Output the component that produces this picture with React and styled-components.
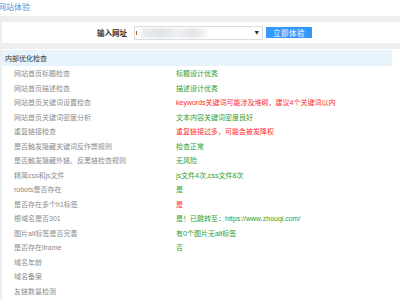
import React from 'react';
import styled, { createGlobalStyle } from 'styled-components';

const Global = createGlobalStyle`
  html, body { margin: 0; padding: 0; background: #fff; }
  body { font-family: "Noto Sans CJK SC", "Liberation Sans", sans-serif; }
  * { box-sizing: border-box; }
`;

const Page = styled.div`
  width: 400px;
  height: 300px;
  overflow: hidden;
  display: flex;
  flex-direction: column;
  background: #fff;
`;

const TitleBar = styled.div`
  height: 16px;
  display: flex;
  align-items: center;
  padding-bottom: 2px;
`;

const Title = styled.span`
  font-size: 8px;
  line-height: 1;
  color: #3d9ae0;
  margin-left: -2px;
`;

const Body = styled.div`
  flex: 1;
  min-height: 0;
  background: #eeeeee;
  padding: 6px 0 0 2px;
  display: flex;
  flex-direction: column;
  gap: 6px;
`;

const SearchPanel = styled.div`
  height: 21px;
  background: #fff;
  display: flex;
  align-items: center;
  padding-left: 95px;
`;

const SearchLabel = styled.span`
  font-size: 7.5px;
  font-weight: bold;
  color: #333;
  line-height: 1;
  margin-right: 7px;
`;

const SelectBox = styled.div`
  width: 129px;
  height: 14px;
  border: 1px solid #dcdcdc;
  display: flex;
  align-items: center;
  padding-left: 1px;
  padding-right: 3px;
  margin-right: 3px;
`;

const Caret = styled.span`
  width: 1px;
  height: 4px;
  background: #c0582a;
`;

const Blurred = styled.span`
  margin-left: 4px;
  width: 66px;
  height: 10px;
  background: linear-gradient(90deg, #eceef0 0%, #dfe2e6 30%, #eef0f2 55%, #e2e5e8 80%, #f4f5f6 100%);
  filter: blur(1.5px);
`;

const Spacer = styled.span`
  flex: 1;
`;

const Arrow = styled.span`
  font-size: 4.5px;
  line-height: 1;
  color: #333;
`;

const Button = styled.button`
  width: 46px;
  height: 11px;
  padding: 0;
  border: none;
  background: #3399ff;
  color: #fff;
  font-family: "Noto Sans CJK SC", sans-serif;
  font-size: 7.5px;
  line-height: 11px;
  letter-spacing: 0.5px;
`;

const ScrollPanel = styled.div`
  flex: 1;
  min-height: 0;
  background: #fff;
  overflow-y: scroll;
  padding-top: 1px;

  &::-webkit-scrollbar { width: 8px; }
  &::-webkit-scrollbar-track { background: #f2f2f2; border-left: 1px solid #e2e2e2; }
  &::-webkit-scrollbar-thumb { background: #e4e4e4; border: 1px solid #c8c8c8; }
  &::-webkit-scrollbar-button:single-button { display: block; height: 8px; background: #f2f2f2; }
`;

const Header = styled.div`
  height: 16px;
  margin-right: 8px;
  background: #e8f4fc;
  display: flex;
  align-items: center;
  padding-left: 3px;
  font-size: 7px;
  color: #333;
`;

const List = styled.div`
  padding: 1px 0 14px;
`;

const Row = styled.div`
  display: grid;
  grid-template-columns: 162px 1fr;
  align-items: center;
  height: 14.5px;
  padding-left: 12px;
  font-family: "Liberation Sans", "Noto Sans CJK SC", sans-serif;
  font-size: 7px;
  line-height: 14.5px;
  white-space: nowrap;
`;

const Label = styled.span`
  color: #8c8c8c;
`;

const Value = styled.span`
  color: ${p => (p.$tone === 'bad' ? '#ff2b2b' : '#2f9e2f')};
`;

const rows = [
  ['网站首页标题检查', '标题设计优秀', 'good'],
  ['网站首页描述检查', '描述设计优秀', 'good'],
  ['网站首页关键词设置检查', 'keywords关键词可能涉及堆砌，建议4个关键词以内', 'bad'],
  ['网站首页关键词密度分析', '文本内容关键词密度良好', 'good'],
  ['重复链接检查', '重复链接过多，可能会被发降权', 'bad'],
  ['是否触发隐藏关键词反作弊规则', '检查正常', 'good'],
  ['是否触发隐藏外链、反黑链检查规则', '无风险', 'good'],
  ['精简css和js文件', 'js文件4次,css文件8次', 'good'],
  ['robots是否存在', '是', 'good'],
  ['是否存在多个h1标签', '是', 'bad'],
  ['根域名是否301', '是！已跳转至：https://www.zhouqi.com/', 'good'],
  ['图片alt标签是否完善', '有0个图片无alt标签', 'good'],
  ['是否存在iframe', '否', 'good'],
  ['域名年龄', '', 'good'],
  ['域名备案', '', 'good'],
  ['友链数量检测', '', 'good'],
];

export default function App() {
  return (
    <>
      <Global />
      <Page>
        <TitleBar>
          <Title>网站体验</Title>
        </TitleBar>
        <Body>
          <SearchPanel>
            <SearchLabel>输入网址</SearchLabel>
            <SelectBox>
              <Caret />
              <Blurred />
              <Spacer />
              <Arrow>▼</Arrow>
            </SelectBox>
            <Button>立即体验</Button>
          </SearchPanel>
          <ScrollPanel>
            <Header>内部优化检查</Header>
            <List>
              {rows.map(([label, value, tone]) => (
                <Row key={label}>
                  <Label>{label}</Label>
                  <Value $tone={tone}>{value}</Value>
                </Row>
              ))}
            </List>
          </ScrollPanel>
        </Body>
      </Page>
    </>
  );
}
